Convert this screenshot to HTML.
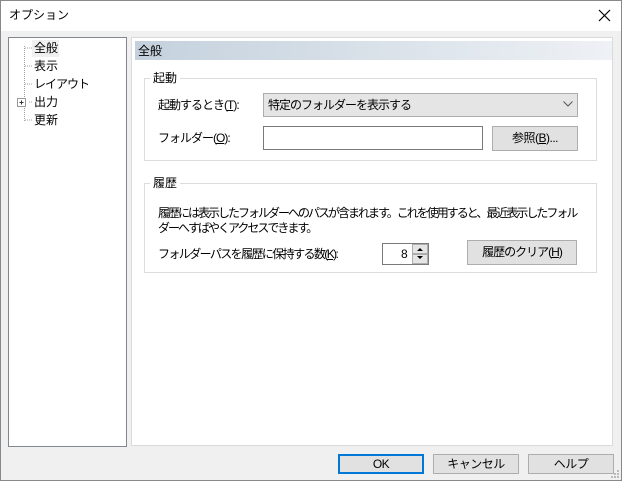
<!DOCTYPE html>
<html><head><meta charset="utf-8"><style>
*{margin:0;padding:0;box-sizing:border-box}
body{width:622px;height:481px;overflow:hidden;font-family:"Liberation Sans","Noto Sans CJK JP",sans-serif;font-size:12px;color:#000;background:#f0f0f0;position:relative}
.a{position:absolute}
.win{left:0;top:0;width:622px;height:481px;border:1px solid #888;background:#f0f0f0}
.title{left:1px;top:1px;width:620px;height:30px;background:#fff}
.t{position:absolute;white-space:nowrap;line-height:14px}
.btn{position:absolute;background:#e1e1e1;border:1px solid #adadad;text-align:center;line-height:20px;letter-spacing:-0.5px}
.gb{position:absolute;border:1px solid #dcdcdc}
.gl{position:absolute;background:#fff;padding:0 3px;line-height:14px}
u{text-decoration:underline}
.n{letter-spacing:-2px}
.m{letter-spacing:-1px}
</style></head><body>
<div class="a win"></div>
<div class="a title"></div>
<div class="t" style="left:9px;top:8px">オプション</div>
<svg class="a" style="left:598px;top:9px" width="13" height="13"><path d="M1 1L12 12M12 1L1 12" stroke="#000" stroke-width="1.2"/></svg>

<div class="a" style="left:8px;top:37px;width:119px;height:410px;background:#fff;border:1px solid #828790"></div>
<svg class="a" style="left:9px;top:38px" width="30" height="90">
<path d="M15.5 8V83M16 10H24M16 28H24M16 46H24M20 64H24M16 82H24" stroke="#a0a0a0" stroke-dasharray="1 1"/>
<rect x="8.5" y="60.5" width="8" height="8" fill="#fff" stroke="#999"/>
<path d="M10.5 64.5H14.5M12.5 62.5V66.5" stroke="#333"/>
</svg>
<div class="a" style="left:32px;top:40px;width:27px;height:17px;background:#f0f0f0"></div>
<div class="t" style="left:34px;top:41px">全般</div>
<div class="t" style="left:34px;top:59px">表示</div>
<div class="t m" style="left:34px;top:77px">レイアウト</div>
<div class="t" style="left:34px;top:95px">出力</div>
<div class="t" style="left:34px;top:113px">更新</div>

<div class="a" style="left:131px;top:37px;width:482px;height:409px;background:#fff;border:1px solid #dadada"></div>
<div class="a" style="left:135px;top:41px;width:477px;height:19px;background:linear-gradient(to right,#c4d1dd,#eef1f5)"></div>
<div class="t" style="left:138px;top:44px">全般</div>

<div class="gb" style="left:144px;top:78px;width:453px;height:83px"></div>
<div class="gl" style="left:150px;top:71px">起動</div>
<div class="t m" style="left:158px;top:98px">起動するとき(<u>T</u>):</div>
<div class="a" style="left:263px;top:93px;width:315px;height:24px;background:#e5e5e5;border:1px solid #adadad"></div>
<div class="t m" style="left:268px;top:98px">特定のフォルダーを表示する</div>
<svg class="a" style="left:563px;top:101px" width="10" height="6"><path d="M0.5 0.5L5 5L9.5 0.5" stroke="#555" fill="none"/></svg>
<div class="t m" style="left:158px;top:131px">フォルダー(<u>O</u>):</div>
<div class="a" style="left:263px;top:126px;width:220px;height:24px;background:#fff;border:1px solid #7a7a7a"></div>
<div class="btn" style="left:492px;top:126px;width:86px;height:25px;line-height:23px">参照(<u>B</u>)...</div>

<div class="gb" style="left:144px;top:183px;width:453px;height:90px"></div>
<div class="gl" style="left:150px;top:176px">履歴</div>
<div class="t n" style="left:158px;top:206px">履歴には表示したフォルダーへのパスが含まれます。これを使用すると、最近表示したフォル</div>
<div class="t n" style="left:158px;top:221px">ダーへすばやくアクセスできます。</div>
<div class="t" style="left:158px;top:247px;letter-spacing:-1.6px">フォルダーパスを履歴に保持する数(<u>K</u>):</div>
<div class="a" style="left:382px;top:243px;width:47px;height:22px;background:#fff;border:1px solid #7a7a7a"></div>
<div class="t" style="left:401px;top:247px">8</div>
<div class="a" style="left:412px;top:244px;width:16px;height:10px;background:#e5e5e5;border:1px solid #adadad"></div>
<div class="a" style="left:412px;top:254px;width:16px;height:10px;background:#e5e5e5;border:1px solid #adadad"></div>
<svg class="a" style="left:416px;top:246px" width="8" height="16"><path d="M1 5L4 2L7 5Z M1 10L4 13L7 10Z" fill="#000"/></svg>
<div class="btn" style="left:467px;top:240px;width:110px;height:25px;line-height:23px;letter-spacing:-1px">履歴のクリア(<u>H</u>)</div>

<div class="btn" style="left:338px;top:454px;width:86px;height:20px;line-height:16px;border:2px solid #0078d7">OK</div>
<div class="btn" style="left:433px;top:454px;width:86px;height:20px;line-height:18px">キャンセル</div>
<div class="btn" style="left:528px;top:454px;width:86px;height:20px;line-height:18px">ヘルプ</div>
<svg class="a" style="left:610px;top:469px" width="10" height="10"><g fill="#bbb"><rect x="7" y="1" width="2" height="2"/><rect x="4" y="4" width="2" height="2"/><rect x="7" y="4" width="2" height="2"/><rect x="1" y="7" width="2" height="2"/><rect x="4" y="7" width="2" height="2"/><rect x="7" y="7" width="2" height="2"/></g></svg>
</body></html>
